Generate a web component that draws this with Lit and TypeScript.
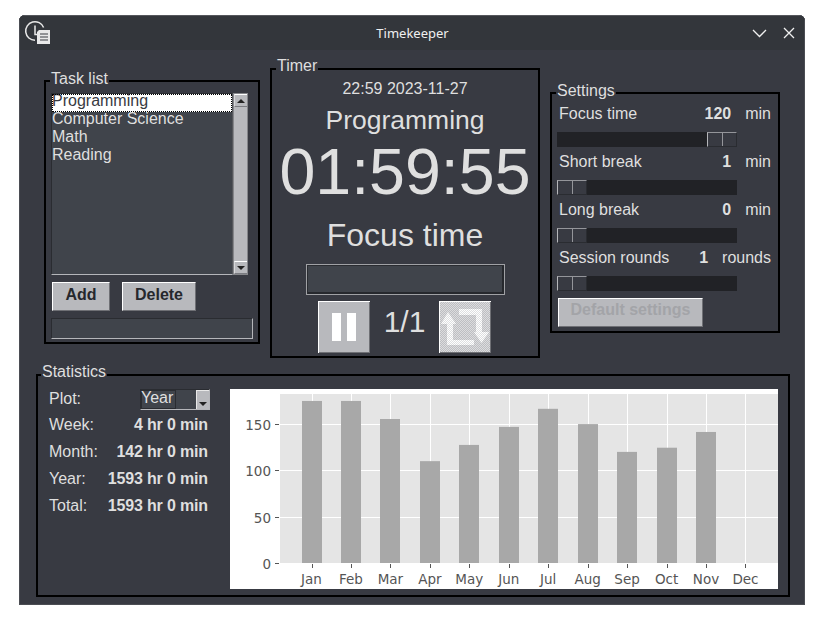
import { LitElement, css, html, svg } from "lit";
import { customElement } from "lit/decorators.js";

type Setting = { label: string; value: number; unit: string; atEnd: boolean };

const SETTINGS: Setting[] = [
	{ label: "Focus time", value: 120, unit: "min", atEnd: true },
	{ label: "Short break", value: 1, unit: "min", atEnd: false },
	{ label: "Long break", value: 0, unit: "min", atEnd: false },
	{ label: "Session rounds", value: 1, unit: "rounds", atEnd: false },
];

const TASKS = ["Programming", "Computer Science", "Math", "Reading"];

const STATS = [
	["Week:", "4 hr 0 min"],
	["Month:", "142 hr 0 min"],
	["Year:", "1593 hr 0 min"],
	["Total:", "1593 hr 0 min"],
];

// chart is measured in its own svg box, hours are read off the y axis
const MONTHS = ["Jan", "Feb", "Mar", "Apr", "May", "Jun", "Jul", "Aug", "Sep", "Oct", "Nov", "Dec"];
const HOURS = [175, 175, 155.5, 110, 127.5, 147, 166.5, 150, 120, 124.5, 141.5, 0];
const PLOT = { left: 50, right: 548, top: 5, bottom: 174 };
const yOf = (h: number) => PLOT.bottom - h * 0.926;
const xOf = (i: number) => 81.5 + i * 39.45;

function chart() {
	return html`<svg class="chart" width="548" height="200" viewBox="0 0 548 200">
		<rect width="548" height="200" fill="#fff"></rect>
		<rect x=${PLOT.left} y=${PLOT.top} width=${PLOT.right - PLOT.left} height=${PLOT.bottom - PLOT.top} fill="#e5e5e5"></rect>
		${[50, 100, 150].map(
			(h) => svg`<line x1=${PLOT.left} x2=${PLOT.right} y1=${Math.round(yOf(h)) + 0.5} y2=${Math.round(yOf(h)) + 0.5} stroke="#fff"></line>`
		)}
		${MONTHS.map((m, i) => {
			const x = Math.round(xOf(i)) + 0.5;
			return svg`
				<line x1=${x} x2=${x} y1=${PLOT.top} y2=${PLOT.bottom} stroke="#fff"></line>
				<line x1=${x} x2=${x} y1=${PLOT.bottom + 1} y2=${PLOT.bottom + 5} stroke="#555"></line>
				<rect x=${Math.round(xOf(i) - 10)} y=${yOf(HOURS[i])} width="20" height=${HOURS[i] * 0.926} fill="#a8a8a8"></rect>
				<text x=${xOf(i)} y="195" class="tick" text-anchor="middle">${m}</text>`;
		})}
		${[0, 50, 100, 150].map((h) => {
			const y = Math.round(yOf(h)) + 0.5;
			return svg`
				<line x1=${PLOT.left - 5} x2=${PLOT.left - 1} y1=${y} y2=${y} stroke="#555"></line>
				<text x=${PLOT.left - 9} y=${y + 5} class="tick" text-anchor="end">${h}</text>`;
		})}
	</svg>`;
}

const appIcon = html`<svg class="app-icon" width="28" height="26" viewBox="0 0 28 26">
	<path d="M19.6 7.5A9.3 9.3 0 1 0 11 20.3" fill="none" stroke="#e8e8e8" stroke-width="1.5"></path>
	<path d="M11 5.5V14.5h3" fill="none" stroke="#e8e8e8" stroke-width="1.5"></path>
	<path d="M15 10h11v14H13V12z" fill="#e8e8e8"></path>
	<path d="M16 14h8M16 17h8M16 20h8" stroke="#3a3c42" stroke-width="1.2" fill="none"></path>
</svg>`;

const chevronIcon = html`<svg width="15" height="9" viewBox="0 0 15 9">
	<path d="M1 1l6.5 6.5L14 1" fill="none" stroke="#f0f0f0" stroke-width="1.3"></path>
</svg>`;

const closeIcon = html`<svg width="12" height="12" viewBox="0 0 12 12">
	<path d="M1 1l10 10M11 1L1 11" fill="none" stroke="#f0f0f0" stroke-width="1.3"></path>
</svg>`;

const pauseIcon = html`<svg width="52" height="52" viewBox="0 0 52 52">
	<path d="M14 12h9v28h-9zM29 12h9v28h-9z" fill="#fff"></path>
</svg>`;

const repeatIcon = html`<svg width="52" height="52" viewBox="0 0 52 52" shape-rendering="crispEdges">
	<defs>
		<pattern id="bg" width="2" height="2" patternUnits="userSpaceOnUse">
			<rect width="2" height="2" fill="#bdbec2"></rect>
			<rect width="1" height="1" fill="#dcdcde"></rect>
			<rect x="1" y="1" width="1" height="1" fill="#dcdcde"></rect>
		</pattern>
		<pattern id="fg" width="2" height="2" patternUnits="userSpaceOnUse">
			<rect width="2" height="2" fill="#dedfe1"></rect>
			<rect width="1" height="1" fill="#fff"></rect>
			<rect x="1" y="1" width="1" height="1" fill="#fff"></rect>
		</pattern>
	</defs>
	<rect width="52" height="52" fill="url(#bg)"></rect>
	<path
		d="M9 11L17 23H14V39H35V44H8V23H2zM20 8H43V31H50L42.5 42L35 31H37V14H20z"
		fill="url(#fg)"
		shape-rendering="auto"
	></path>
</svg>`;

@customElement("app-root")
export class AppRoot extends LitElement {
	static styles = css`
		:host {
			display: block;
			width: 825px;
			height: 629px;
			background: #fff;
			padding: 15px 20px 24px 19px;
			box-sizing: border-box;
			font-family: "Liberation Sans", Arial, sans-serif;
			font-size: 16px;
			color: #dfdfdf;
		}
		.window {
			width: 786px;
			height: 590px;
			display: flex;
			flex-direction: column;
			background: #383a42;
			border-radius: 6px 6px 0 0;
			box-shadow: inset 0 0 0 1px #4b4d53;
			overflow: hidden;
		}
		.titlebar {
			height: 35px;
			flex: none;
			display: flex;
			align-items: center;
			background: #33363b;
			border-top: 1px solid #55575c;
			border-left: 1px solid #4b4d53;
			border-right: 1px solid #4b4d53;
			box-sizing: border-box;
			padding: 0 9px 0 4px;
		}
		.app-icon {
			flex: none;
		}
		.title {
			flex: 1;
			text-align: center;
			font-family: "Noto Sans", sans-serif;
			font-size: 13px;
			color: #f0f0f0;
			padding-left: 21px;
		}
		.win-btns {
			display: flex;
			align-items: center;
			gap: 16px;
		}
		.top {
			display: flex;
			align-items: flex-start;
			gap: 10px;
			height: 290px;
			margin: 18px 0 0 25px;
		}
		.frame {
			position: relative;
			border: 2px solid #000;
			box-sizing: border-box;
		}
		.legend {
			position: absolute;
			top: -13px;
			left: 4px;
			padding: 0 1px;
			line-height: 18px;
			background: #383a42;
		}
		.tasks .legend,
		.settings .legend {
			top: -12px;
		}
		.stats .legend {
			left: 3px;
		}
		.tasks {
			width: 216px;
			height: 264px;
			margin-top: 12px;
			padding: 11px 0 0 5px;
		}
		.list-row {
			display: flex;
			height: 182px;
		}
		.list {
			width: 182px;
			background: #40444b;
			border: 1px solid;
			border-color: #2a2c31 #55575c #b5b6ba #2a2c31;
			box-sizing: border-box;
			white-space: nowrap;
		}
		.list .item {
			height: 18px;
			line-height: 14px;
		}
		.list .item.selected {
			background: #fff;
			color: #383a42;
			outline: 1px dotted #000;
			outline-offset: -1px;
		}
		.scrollbar {
			width: 15px;
			box-sizing: border-box;
			border: 1px solid #85868a;
			background: #b8b9bd;
			display: flex;
			flex-direction: column;
			justify-content: space-between;
		}
		.arrow {
			height: 11px;
			display: flex;
			align-items: center;
			justify-content: center;
			border-top: 1px solid #fff;
			border-left: 1px solid #d8d8da;
			border-bottom: 1px solid #7a7b80;
			background: #b8b9bd;
		}
		.tri-up,
		.tri-down {
			width: 0;
			height: 0;
			border-left: 4px solid transparent;
			border-right: 4px solid transparent;
		}
		.tri-up {
			border-bottom: 4px solid #222;
		}
		.tri-down {
			border-top: 4px solid #222;
		}
		.task-btns {
			display: flex;
			gap: 12px;
			margin: 7px 0 0 1px;
		}
		.btn {
			display: flex;
			align-items: center;
			justify-content: center;
			box-sizing: border-box;
			background: #b8b9bd;
			color: #26282d;
			font-weight: 700;
			border: 1px solid;
			border-color: #fff #6f7075 #6f7075 #fff;
		}
		.btn.add,
		.btn.delete {
			height: 29px;
			padding-bottom: 4px;
		}
		.btn.add {
			width: 58px;
		}
		.btn.delete {
			width: 74px;
		}
		.entry {
			width: 202px;
			height: 21px;
			margin-top: 7px;
			background: #40444b;
			border: 1px solid;
			border-color: #2a2c31 #b5b6ba #b5b6ba #2a2c31;
			box-sizing: border-box;
		}
		.timer {
			width: 270px;
			height: 290px;
			display: flex;
			flex-direction: column;
			align-items: center;
			padding-top: 10px;
		}
		.date {
			line-height: 18px;
		}
		.task-name {
			margin-top: 7px;
			font-size: 26.5px;
			line-height: 30px;
		}
		.clock {
			margin-top: 5px;
			font-size: 64.5px;
			line-height: 64px;
		}
		.phase {
			margin-top: 13px;
			font-size: 32px;
			line-height: 37px;
		}
		.progress {
			width: 199px;
			height: 31px;
			margin-top: 10px;
			box-sizing: border-box;
			background: #40444b;
			border: 1px solid #a0a1a5;
			box-shadow: inset 1px 1px 0 #2a2c31, inset -2px -2px 0 #26282d;
		}
		.controls {
			display: flex;
			align-items: center;
			margin: 6px 1px 0 0;
		}
		.icon-btn {
			width: 52px;
			height: 52px;
			box-sizing: border-box;
			background: #b8b9bd;
			position: relative;
			overflow: hidden;
		}
		.icon-btn svg {
			display: block;
		}
		.icon-btn .edge {
			position: absolute;
			inset: 0;
			box-shadow: inset 1px 1px 0 #fff, inset -1px -1px 0 #6f7075;
		}
		.count {
			width: 69px;
			text-align: center;
			font-size: 30px;
			padding-bottom: 10px;
		}
		.settings {
			width: 230px;
			height: 241px;
			margin-top: 24px;
			padding-top: 10px;
		}
		.setting-row {
			display: flex;
			line-height: 20px;
			height: 18px;
			width: 212px;
			margin-left: 7px;
		}
		.setting-row .name {
			flex: 1;
		}
		.setting-row .value {
			font-weight: 700;
		}
		.setting-row .unit {
			margin-left: 14px;
		}
		.slider {
			display: flex;
			width: 180px;
			height: 15px;
			margin: 10px 0 5px 5px;
			background: #212226;
		}
		.slider.end {
			justify-content: flex-end;
		}
		.thumb {
			width: 30px;
			height: 15px;
			box-sizing: border-box;
			display: flex;
			background: #383a42;
			border-top: 1px solid #94959a;
			border-left: 1px solid #b5b6ba;
			border-right: 1px solid #2a2c31;
			border-bottom: 1px solid #2a2c31;
		}
		.thumb i {
			flex: 1;
		}
		.thumb i:first-child {
			border-right: 1px solid #94959a;
		}
		.btn.defaults {
			width: 145px;
			height: 29px;
			margin: 7px 0 0 6px;
			padding-bottom: 5px;
			color: #a3a4a8;
		}
		.stats {
			width: 754px;
			height: 223px;
			margin: 16px 0 0 17px;
			padding: 13px 0 0 11px;
			display: flex;
			gap: 20px;
		}
		.stat-col {
			width: 161px;
			flex: none;
		}
		.plot-row {
			display: flex;
			justify-content: space-between;
			align-items: center;
			height: 21px;
		}
		.plot-row > span {
			padding-bottom: 2px;
		}
		.select {
			width: 70px;
			height: 21px;
			display: flex;
			box-sizing: border-box;
			background: #40444b;
			border: 1px solid;
			border-color: #2a2c31 #b5b6ba #b5b6ba #2a2c31;
			position: relative;
		}
		.select .current {
			width: 35px;
			line-height: 13px;
			height: 19px;
			box-sizing: border-box;
			border: 1px solid #2a2c31;
			white-space: nowrap;
			text-indent: -1px;
		}
		.select .drop {
			position: absolute;
			right: 0;
			top: 0;
			bottom: 0;
			width: 13px;
			background: #b8b9bd;
			border-top: 1px solid #e8e8e8;
			border-left: 1px solid #e8e8e8;
			box-sizing: border-box;
			display: flex;
			align-items: flex-end;
			justify-content: center;
			padding-bottom: 3px;
		}
		.stat-row {
			display: flex;
			justify-content: space-between;
			align-items: center;
			height: 27px;
			padding-right: 2px;
		}
		.plot-row + .stat-row {
			margin-top: 1px;
		}
		.stat-row b {
			font-weight: 700;
			letter-spacing: -0.15px;
		}
		.chart {
			display: block;
			flex: none;
		}
		.tick {
			font-family: "DejaVu Sans", sans-serif;
			font-size: 13.5px;
			fill: #555;
		}
	`;

	render() {
		return html`<div class="window">
			<div class="titlebar">
				${appIcon}
				<div class="title">Timekeeper</div>
				<div class="win-btns">${chevronIcon}${closeIcon}</div>
			</div>
			<div class="top">
				<section class="frame tasks">
					<div class="legend">Task list</div>
					<div class="list-row">
						<div class="list">
							${TASKS.map(
								(t, i) => html`<div class="item ${i === 0 ? "selected" : ""}">${t}</div>`
							)}
						</div>
						<div class="scrollbar">
							<div class="arrow"><div class="tri-up"></div></div>
							<div class="arrow"><div class="tri-down"></div></div>
						</div>
					</div>
					<div class="task-btns">
						<div class="btn add">Add</div>
						<div class="btn delete">Delete</div>
					</div>
					<div class="entry"></div>
				</section>
				<section class="frame timer">
					<div class="legend">Timer</div>
					<div class="date">22:59 2023-11-27</div>
					<div class="task-name">Programming</div>
					<div class="clock">01:59:55</div>
					<div class="phase">Focus time</div>
					<div class="progress"></div>
					<div class="controls">
						<div class="icon-btn">${pauseIcon}<div class="edge"></div></div>
						<div class="count">1/1</div>
						<div class="icon-btn">${repeatIcon}<div class="edge"></div></div>
					</div>
				</section>
				<section class="frame settings">
					<div class="legend">Settings</div>
					${SETTINGS.map(
						(s) => html`<div class="setting-row">
								<span class="name">${s.label}</span>
								<span class="value">${s.value}</span>
								<span class="unit">${s.unit}</span>
							</div>
							<div class="slider ${s.atEnd ? "end" : ""}">
								<div class="thumb"><i></i><i></i></div>
							</div>`
					)}
					<div class="btn defaults">Default settings</div>
				</section>
			</div>
			<section class="frame stats">
				<div class="legend">Statistics</div>
				<div class="stat-col">
					<div class="plot-row">
						<span>Plot:</span>
						<div class="select">
							<div class="current">Year</div>
							<div class="drop"><div class="tri-down"></div></div>
						</div>
					</div>
					${STATS.map(
						([k, v]) => html`<div class="stat-row"><span>${k}</span><b>${v}</b></div>`
					)}
				</div>
				${chart()}
			</section>
		</div>`;
	}
}
